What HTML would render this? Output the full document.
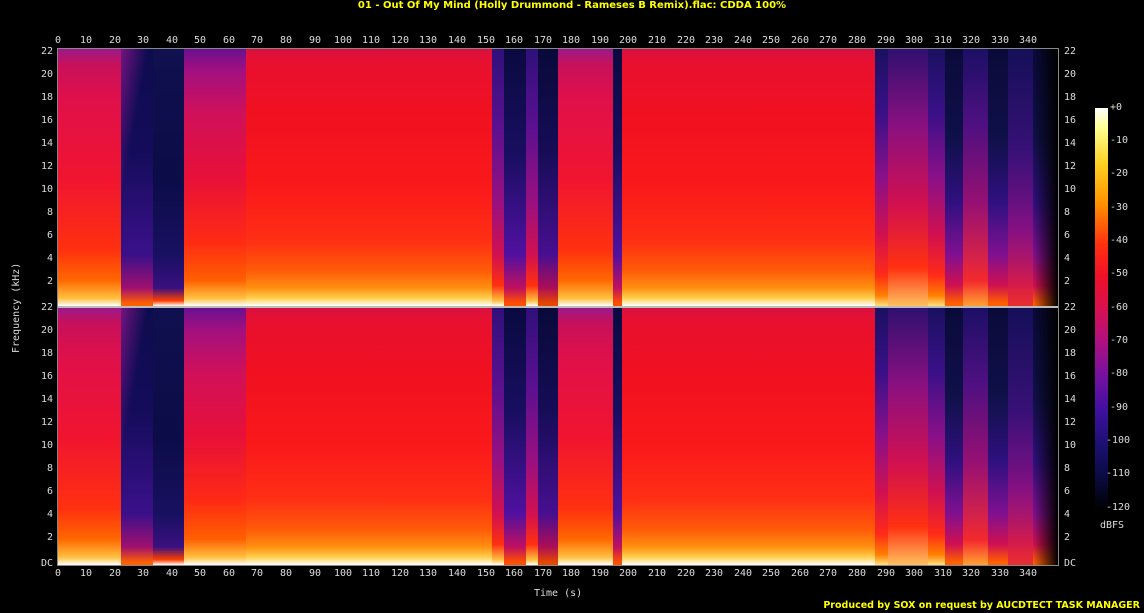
<!DOCTYPE html>
<html><head><meta charset="utf-8"><style>
html,body{margin:0;padding:0;background:#000;width:1144px;height:613px;overflow:hidden;position:relative;font-family:"DejaVu Sans Mono","Liberation Mono",monospace;}
.t{position:absolute;color:#ddd;font-size:10px;line-height:12px;white-space:nowrap;}
.title{position:absolute;top:0;left:0;width:1144px;text-align:center;color:#ff0;font-size:10px;font-weight:bold;font-family:"DejaVu Sans","Liberation Sans",sans-serif;}
.panel{position:absolute;left:58px;width:1000px;overflow:hidden;background:#000;}
.s{position:absolute;top:0;bottom:0;}
.R{background:linear-gradient(#d81040 0%,#e81030 5%,#f01020 25%,#fa1a1a 55%,#ff3014 75%,#ff5a08 86%,#ff9010 93%,#ffd050 97%,#fff 100%);}
.RM{background:linear-gradient(#9a1a8a 0%,#c8105a 6%,#e0104a 20%,#f01430 50%,#ff3010 78%,#ff6800 90%,#ffc040 97%,#fff 100%);}
.N{background:linear-gradient(#101050 0%,#0c0c48 50%,#181060 80%,#3a1080 93%,#ff4000 98%,#fff 100%);}
.NP{background:linear-gradient(#30107a 0%,#5a1090 30%,#9a1080 60%,#d01050 80%,#ff3010 92%,#ffc040 98%,#fff 100%);}
.P{background:linear-gradient(#6a1090 0%,#a01080 8%,#d0105a 25%,#e81038 50%,#ff2a14 75%,#ff6000 90%,#ffc040 97%,#fff 100%);}
.D{background:linear-gradient(#0a0a40 0%,#180e60 40%,#5010a0 80%,#c01060 93%,#ff5000 99%);}
.T{background:linear-gradient(#1a1060 0%,#3a1088 25%,#8a1088 50%,#d01050 72%,#ff2a18 88%,#ff8000 96%,#ffe080 100%);}
.TD{background:linear-gradient(#0a0a3a 0%,#10104a 35%,#301080 60%,#801090 80%,#d01050 92%,#ff6000 99%);}
.sep{position:absolute;left:58px;width:1000px;height:2px;background:#bbb;}
.ax{position:absolute;background:#888;}
</style></head><body>
<div class="title">01 - Out Of My Mind (Holly Drummond - Rameses B Remix).flac: CDDA 100%</div>

<div class="panel" style="top:49px;height:257px;">
 <div class="s RM" style="left:0;width:63px"></div>
 <div class="s" style="left:63px;width:32px;background:linear-gradient(#0e0c50,#140c5a 40%,#3a108a 80%,#a01070 93%,#ff6000 99%)"></div>
 <div class="s" style="left:63px;width:32px;background:linear-gradient(100deg,rgba(140,20,140,.8) 0%,rgba(120,20,140,0) 35%)"></div>
 <div class="s N" style="left:95px;width:31px"></div>
 <div class="s P" style="left:126px;width:62px"></div>
 <div class="s R" style="left:188px;width:246px"></div>
 <div class="s NP" style="left:434px;width:46px"></div>
 <div class="s D" style="left:446px;width:22px"></div>
 <div class="s D" style="left:480px;width:20px;opacity:.9"></div>
 <div class="s RM" style="left:500px;width:55px"></div>
 <div class="s D" style="left:555px;width:9px"></div>
 <div class="s R" style="left:564px;width:253px"></div>
 <div class="s T" style="left:817px;width:70px"></div>
 <div class="s" style="left:830px;width:40px;background:linear-gradient(#301070,#8a1080 30%,#d01050 60%,#ff3010 85%,#ffc060)"></div>
 <div class="s TD" style="left:887px;width:113px"></div>
 <div class="s" style="left:905px;width:25px;background:linear-gradient(#201070,#601090 30%,#b01070 60%,#ff3020 90%,#ffb040);opacity:.8"></div>
 <div class="s" style="left:950px;width:25px;background:linear-gradient(#181060,#401080 40%,#901080 70%,#e02040 95%);opacity:.8"></div>
 <div class="s" style="left:975px;width:25px;background:linear-gradient(90deg,rgba(0,0,0,0),#000)"></div>
</div>
<div class="sep" style="top:306px"></div>
<div class="panel" style="top:308px;height:257px;">
 <div class="s RM" style="left:0;width:63px"></div>
 <div class="s" style="left:63px;width:32px;background:linear-gradient(#0e0c50,#140c5a 40%,#3a108a 80%,#a01070 93%,#ff6000 99%)"></div>
 <div class="s" style="left:63px;width:32px;background:linear-gradient(100deg,rgba(140,20,140,.8) 0%,rgba(120,20,140,0) 35%)"></div>
 <div class="s N" style="left:95px;width:31px"></div>
 <div class="s P" style="left:126px;width:62px"></div>
 <div class="s R" style="left:188px;width:246px"></div>
 <div class="s NP" style="left:434px;width:46px"></div>
 <div class="s D" style="left:446px;width:22px"></div>
 <div class="s D" style="left:480px;width:20px;opacity:.9"></div>
 <div class="s RM" style="left:500px;width:55px"></div>
 <div class="s D" style="left:555px;width:9px"></div>
 <div class="s R" style="left:564px;width:253px"></div>
 <div class="s T" style="left:817px;width:70px"></div>
 <div class="s" style="left:830px;width:40px;background:linear-gradient(#301070,#8a1080 30%,#d01050 60%,#ff3010 85%,#ffc060)"></div>
 <div class="s TD" style="left:887px;width:113px"></div>
 <div class="s" style="left:905px;width:25px;background:linear-gradient(#201070,#601090 30%,#b01070 60%,#ff3020 90%,#ffb040);opacity:.8"></div>
 <div class="s" style="left:950px;width:25px;background:linear-gradient(#181060,#401080 40%,#901080 70%,#e02040 95%);opacity:.8"></div>
 <div class="s" style="left:975px;width:25px;background:linear-gradient(90deg,rgba(0,0,0,0),#000)"></div>
</div>

<div class="ax" style="left:57px;top:48px;width:1px;height:518px"></div>
<div class="ax" style="left:1058px;top:48px;width:1px;height:518px"></div>
<div class="ax" style="left:57px;top:48px;width:1002px;height:1px"></div>
<div class="ax" style="left:57px;top:565px;width:1002px;height:1px"></div>

<div class="t" style="top:35px;left:55px">0</div><div class="t" style="top:568px;left:55px">0</div>
<div class="t" style="top:35px;left:80px">10</div><div class="t" style="top:568px;left:80px">10</div>
<div class="t" style="top:35px;left:109px">20</div><div class="t" style="top:568px;left:109px">20</div>
<div class="t" style="top:35px;left:137px">30</div><div class="t" style="top:568px;left:137px">30</div>
<div class="t" style="top:35px;left:166px">40</div><div class="t" style="top:568px;left:166px">40</div>
<div class="t" style="top:35px;left:194px">50</div><div class="t" style="top:568px;left:194px">50</div>
<div class="t" style="top:35px;left:223px">60</div><div class="t" style="top:568px;left:223px">60</div>
<div class="t" style="top:35px;left:251px">70</div><div class="t" style="top:568px;left:251px">70</div>
<div class="t" style="top:35px;left:280px">80</div><div class="t" style="top:568px;left:280px">80</div>
<div class="t" style="top:35px;left:309px">90</div><div class="t" style="top:568px;left:309px">90</div>
<div class="t" style="top:35px;left:334px">100</div><div class="t" style="top:568px;left:334px">100</div>
<div class="t" style="top:35px;left:362px">110</div><div class="t" style="top:568px;left:362px">110</div>
<div class="t" style="top:35px;left:391px">120</div><div class="t" style="top:568px;left:391px">120</div>
<div class="t" style="top:35px;left:419px">130</div><div class="t" style="top:568px;left:419px">130</div>
<div class="t" style="top:35px;left:448px">140</div><div class="t" style="top:568px;left:448px">140</div>
<div class="t" style="top:35px;left:477px">150</div><div class="t" style="top:568px;left:477px">150</div>
<div class="t" style="top:35px;left:505px">160</div><div class="t" style="top:568px;left:505px">160</div>
<div class="t" style="top:35px;left:534px">170</div><div class="t" style="top:568px;left:534px">170</div>
<div class="t" style="top:35px;left:562px">180</div><div class="t" style="top:568px;left:562px">180</div>
<div class="t" style="top:35px;left:591px">190</div><div class="t" style="top:568px;left:591px">190</div>
<div class="t" style="top:35px;left:619px">200</div><div class="t" style="top:568px;left:619px">200</div>
<div class="t" style="top:35px;left:648px">210</div><div class="t" style="top:568px;left:648px">210</div>
<div class="t" style="top:35px;left:677px">220</div><div class="t" style="top:568px;left:677px">220</div>
<div class="t" style="top:35px;left:705px">230</div><div class="t" style="top:568px;left:705px">230</div>
<div class="t" style="top:35px;left:734px">240</div><div class="t" style="top:568px;left:734px">240</div>
<div class="t" style="top:35px;left:762px">250</div><div class="t" style="top:568px;left:762px">250</div>
<div class="t" style="top:35px;left:791px">260</div><div class="t" style="top:568px;left:791px">260</div>
<div class="t" style="top:35px;left:819px">270</div><div class="t" style="top:568px;left:819px">270</div>
<div class="t" style="top:35px;left:848px">280</div><div class="t" style="top:568px;left:848px">280</div>
<div class="t" style="top:35px;left:877px">290</div><div class="t" style="top:568px;left:877px">290</div>
<div class="t" style="top:35px;left:905px">300</div><div class="t" style="top:568px;left:905px">300</div>
<div class="t" style="top:35px;left:934px">310</div><div class="t" style="top:568px;left:934px">310</div>
<div class="t" style="top:35px;left:962px">320</div><div class="t" style="top:568px;left:962px">320</div>
<div class="t" style="top:35px;left:991px">330</div><div class="t" style="top:568px;left:991px">330</div>
<div class="t" style="top:35px;left:1019px">340</div><div class="t" style="top:568px;left:1019px">340</div>

<div class="t" style="left:41px;top:46px">22</div><div class="t" style="left:41px;top:69px">20</div><div class="t" style="left:41px;top:92px">18</div><div class="t" style="left:41px;top:115px">16</div><div class="t" style="left:41px;top:138px">14</div><div class="t" style="left:41px;top:161px">12</div><div class="t" style="left:41px;top:184px">10</div><div class="t" style="left:47px;top:207px">8</div><div class="t" style="left:47px;top:230px">6</div><div class="t" style="left:47px;top:253px">4</div><div class="t" style="left:47px;top:276px">2</div>
<div class="t" style="left:41px;top:302px">22</div><div class="t" style="left:41px;top:325px">20</div><div class="t" style="left:41px;top:348px">18</div><div class="t" style="left:41px;top:371px">16</div><div class="t" style="left:41px;top:394px">14</div><div class="t" style="left:41px;top:417px">12</div><div class="t" style="left:41px;top:440px">10</div><div class="t" style="left:47px;top:463px">8</div><div class="t" style="left:47px;top:486px">6</div><div class="t" style="left:47px;top:509px">4</div><div class="t" style="left:47px;top:532px">2</div><div class="t" style="left:41px;top:558px">DC</div>
<div class="t" style="left:1064px;top:46px">22</div><div class="t" style="left:1064px;top:69px">20</div><div class="t" style="left:1064px;top:92px">18</div><div class="t" style="left:1064px;top:115px">16</div><div class="t" style="left:1064px;top:138px">14</div><div class="t" style="left:1064px;top:161px">12</div><div class="t" style="left:1064px;top:184px">10</div><div class="t" style="left:1064px;top:207px">8</div><div class="t" style="left:1064px;top:230px">6</div><div class="t" style="left:1064px;top:253px">4</div><div class="t" style="left:1064px;top:276px">2</div>
<div class="t" style="left:1064px;top:302px">22</div><div class="t" style="left:1064px;top:325px">20</div><div class="t" style="left:1064px;top:348px">18</div><div class="t" style="left:1064px;top:371px">16</div><div class="t" style="left:1064px;top:394px">14</div><div class="t" style="left:1064px;top:417px">12</div><div class="t" style="left:1064px;top:440px">10</div><div class="t" style="left:1064px;top:463px">8</div><div class="t" style="left:1064px;top:486px">6</div><div class="t" style="left:1064px;top:509px">4</div><div class="t" style="left:1064px;top:532px">2</div><div class="t" style="left:1064px;top:558px">DC</div>

<div class="t" style="left:-28px;top:302px;transform:rotate(-90deg);width:90px;text-align:center">Frequency (kHz)</div>
<div class="t" style="left:534px;top:588px">Time (s)</div>

<div style="position:absolute;left:1095px;top:108px;width:13px;height:402px;background:linear-gradient(#fff 0%,#ffff90 5%,#ffd020 14%,#ff9000 24%,#ff3010 34%,#f01028 42%,#d81050 50%,#b01080 58%,#7a10a0 66%,#4010a0 75%,#1a1070 84%,#0a0a40 92%,#000 100%)"></div>
<div class="t" style="left:1110px;top:102px">+0</div>
<div class="t" style="left:1110px;top:135px">-10</div>
<div class="t" style="left:1110px;top:168px">-20</div>
<div class="t" style="left:1110px;top:202px">-30</div>
<div class="t" style="left:1110px;top:235px">-40</div>
<div class="t" style="left:1110px;top:268px">-50</div>
<div class="t" style="left:1110px;top:302px">-60</div>
<div class="t" style="left:1110px;top:335px">-70</div>
<div class="t" style="left:1110px;top:368px">-80</div>
<div class="t" style="left:1110px;top:402px">-90</div>
<div class="t" style="left:1106px;top:435px">-100</div>
<div class="t" style="left:1106px;top:468px">-110</div>
<div class="t" style="left:1106px;top:502px">-120</div>
<div class="t" style="left:1100px;top:520px">dBFS</div>

<div style="position:absolute;right:4px;top:600px;color:#ff0;font-size:9.5px;font-weight:bold;font-family:'DejaVu Sans','Liberation Sans',sans-serif;line-height:12px">Produced by SOX on request by AUCDTECT TASK MANAGER</div>
</body></html>
